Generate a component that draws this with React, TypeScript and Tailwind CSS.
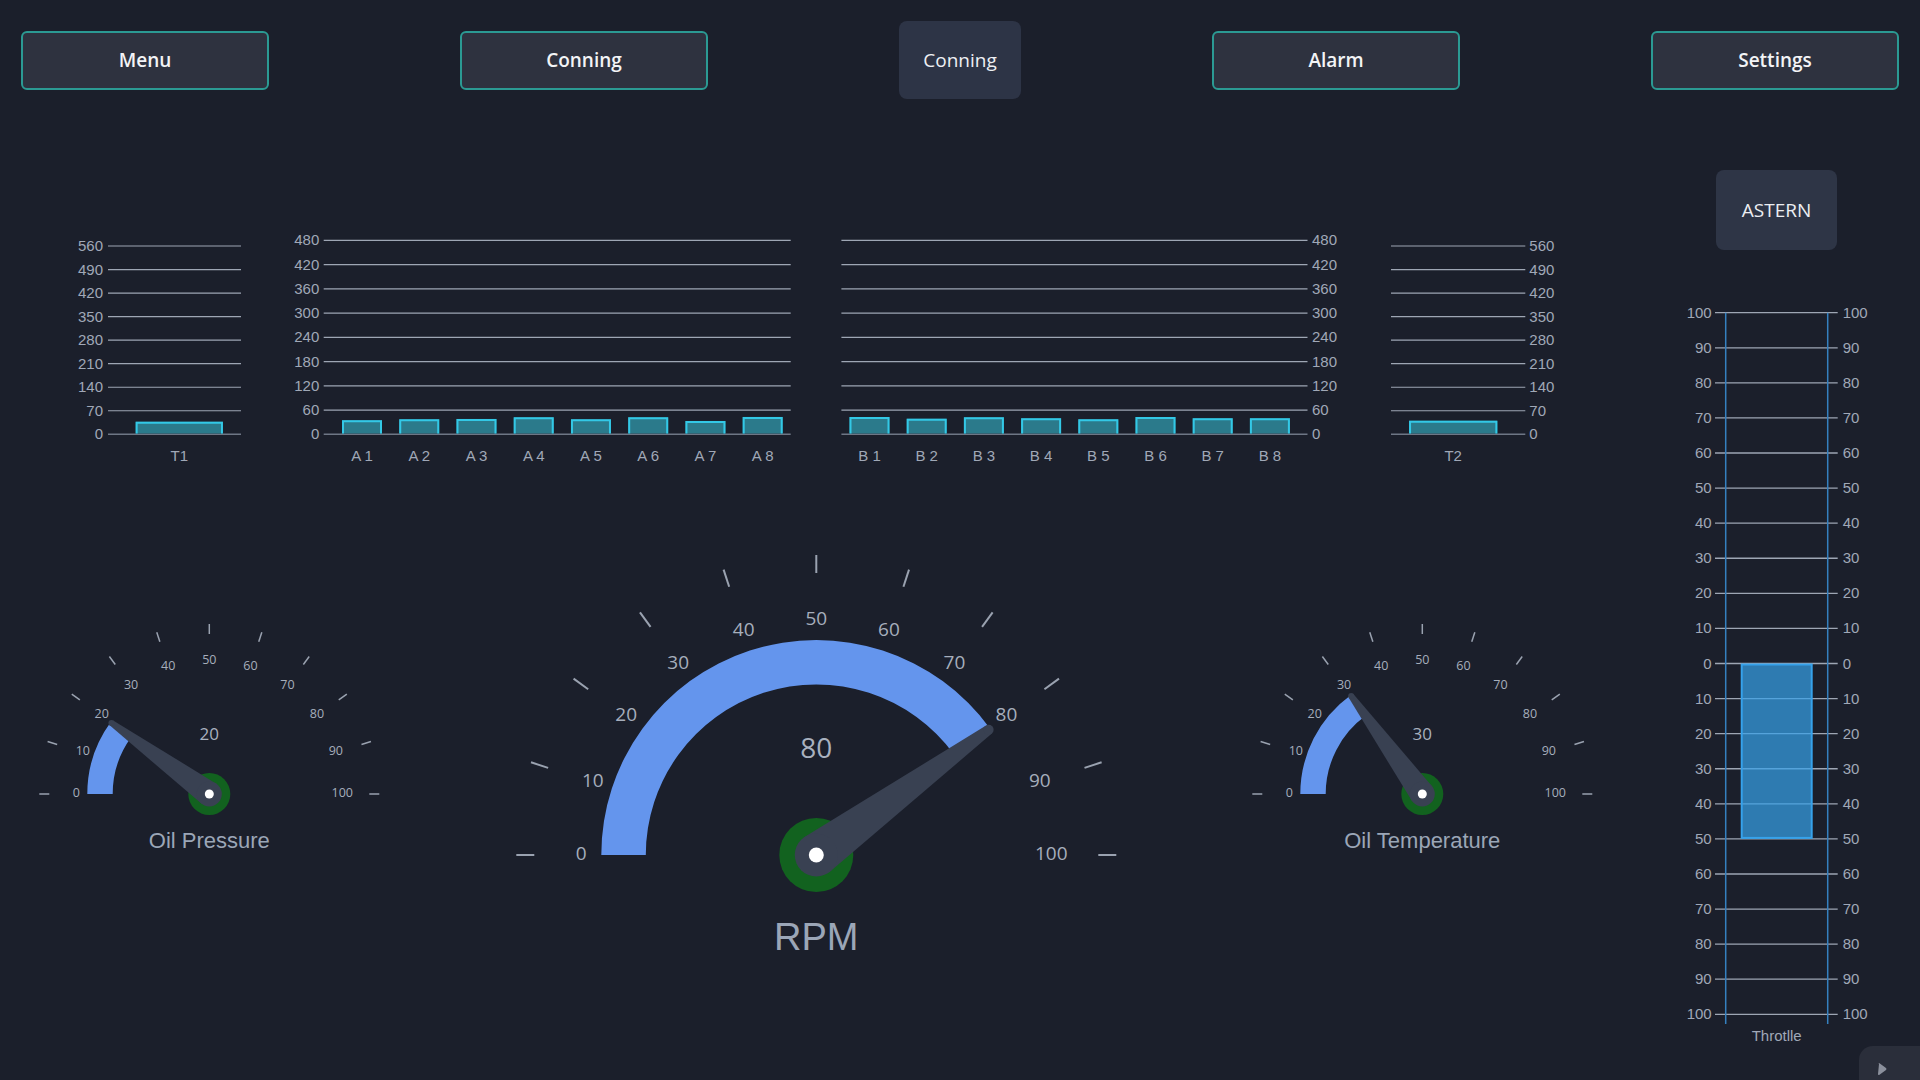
import React from "react";

const ARIAL = "'Liberation Sans', Arial, sans-serif";
const SEGOE = "'Open Sans', 'Noto Sans', sans-serif";

type Bar = { c: number; w: number; v: number; label: string };

function BarChart(props: {
  width: number;
  height: number;
  max: number;
  step: number;
  yTop: number;
  yBase: number;
  x1: number;
  x2: number;
  labelX: number;
  anchor: "start" | "end";
  bars: Bar[];
  labelY: number;
}) {
  const { width, height, max, step, yTop, yBase, x1, x2, labelX, anchor, bars, labelY } = props;
  const ticks: number[] = [];
  for (let v = 0; v <= max; v += step) ticks.push(v);
  const yOf = (v: number) => yBase - (v / max) * (yBase - yTop);
  return (
    <svg width={width} height={height} className="block shrink-0">
      {ticks.map((t) => (
        <g key={t}>
          <line
            x1={x1}
            x2={x2}
            y1={yOf(t)}
            y2={yOf(t)}
            stroke={t === 0 ? "#6e7685" : "#9ea6b4"}
            strokeWidth={t === 0 ? 1.6 : 1.2}
          />
          <text
            x={labelX}
            y={yOf(t) - 0.5}
            textAnchor={anchor}
            dominantBaseline="central"
            fontFamily={ARIAL}
            fontSize={15}
            fill="#a0a8b7"
          >
            {t}
          </text>
        </g>
      ))}
      {bars.map((b) => {
        const top = yOf(b.v);
        const l = b.c - b.w / 2;
        const r = b.c + b.w / 2;
        return (
          <g key={b.label}>
            <rect x={l} y={top} width={b.w} height={yBase - top - 0.8} fill="#2b7a8b" />
            <polyline
              points={`${l + 1},${yBase - 0.8} ${l + 1},${top + 1} ${r - 1},${top + 1} ${r - 1},${yBase - 0.8}`}
              fill="none"
              stroke="#33c8e6"
              strokeWidth={2}
            />
            <text
              x={b.c}
              y={labelY}
              textAnchor="middle"
              dominantBaseline="central"
              fontFamily={ARIAL}
              fontSize={15}
              fill="#a0a8b7"
            >
              {b.label}
            </text>
          </g>
        );
      })}
    </svg>
  );
}

function Gauge(props: {
  width: number;
  height: number;
  cx: number;
  cy: number;
  R: number;
  r: number;
  tIn: number;
  tOut: number;
  tickW: number;
  lR: number;
  lSize: number;
  value: number;
  vOff: number;
  vSize: number;
  hubR: number;
  hubIn: number;
  dotR: number;
  tipW: number;
  needleL: number;
  title: string;
  titleY: number;
  titleSize: number;
  textShift: number;
}) {
  const p = props;
  const pt = (rad: number, a: number) => [p.cx + rad * Math.cos(a), p.cy - rad * Math.sin(a)];
  const a0 = Math.PI;
  const a1 = Math.PI - (p.value / 100) * Math.PI;
  const [ox0, oy0] = pt(p.R, a0);
  const [ox1, oy1] = pt(p.R, a1);
  const [ix1, iy1] = pt(p.r, a1);
  const [ix0, iy0] = pt(p.r, a0);
  const arc = `M ${ox0} ${oy0} A ${p.R} ${p.R} 0 0 1 ${ox1} ${oy1} L ${ix1} ${iy1} A ${p.r} ${p.r} 0 0 0 ${ix0} ${iy0} Z`;
  const [tx, ty] = pt(p.needleL, a1);
  const nx = Math.sin(a1);
  const ny = Math.cos(a1);
  const needle = `${p.cx + nx * p.hubIn},${p.cy + ny * p.hubIn} ${tx + nx * p.tipW},${ty + ny * p.tipW} ${tx - nx * p.tipW},${ty - ny * p.tipW} ${p.cx - nx * p.hubIn},${p.cy - ny * p.hubIn}`;
  const ticks = Array.from({ length: 11 }, (_, i) => i * 10);
  return (
    <svg width={p.width} height={p.height} className="block shrink-0">
      {ticks.map((t) => {
        const a = Math.PI - (t / 100) * Math.PI;
        const [x1, y1] = pt(p.tIn, a);
        const [x2, y2] = pt(p.tOut, a);
        const [lx, ly] = pt(p.lR, a);
        return (
          <g key={t}>
            <line x1={x1} y1={y1} x2={x2} y2={y2} stroke="#9aa2b0" strokeWidth={p.tickW} />
            <text
              x={lx}
              y={ly - p.textShift}
              textAnchor="middle"
              dominantBaseline="central"
              fontFamily={SEGOE}
              fontSize={p.lSize}
              fill="#a6aebc"
            >
              {t}
            </text>
          </g>
        );
      })}
      <path d={arc} fill="#6495ed" />
      <text
        x={p.cx}
        y={p.cy - p.vOff - p.textShift}
        textAnchor="middle"
        dominantBaseline="central"
        fontFamily={SEGOE}
        fontSize={p.vSize}
        fill="#a9b1bf"
      >
        {p.value}
      </text>
      <circle cx={p.cx} cy={p.cy} r={p.hubR} fill="#12621f" />
      <polygon points={needle} fill="#394152" />
      <circle cx={tx} cy={ty} r={p.tipW} fill="#394152" />
      <circle cx={p.cx} cy={p.cy} r={p.hubIn} fill="#394152" />
      <circle cx={p.cx} cy={p.cy} r={p.dotR} fill="#ffffff" />
      <text
        x={p.cx}
        y={p.titleY}
        textAnchor="middle"
        dominantBaseline="central"
        fontFamily={ARIAL}
        fontSize={p.titleSize}
        fill="#9ba6b7"
      >
        {p.title}
      </text>
    </svg>
  );
}

function SmallGauge({ value, title, cx }: { value: number; title: string; cx: number }) {
  return (
    <Gauge
      width={380}
      height={320}
      cx={cx}
      cy={254}
      R={122}
      r={96.6}
      tIn={160}
      tOut={170}
      tickW={1.5}
      lR={133}
      lSize={12.5}
      value={value}
      vOff={59}
      vSize={17}
      hubR={21}
      hubIn={12.5}
      dotR={4.5}
      tipW={3}
      needleL={121}
      title={title}
      titleY={300}
      titleSize={22}
      textShift={2}
    />
  );
}

function Throttle() {
  const labels = [100, 90, 80, 70, 60, 50, 40, 30, 20, 10, 0, 10, 20, 30, 40, 50, 60, 70, 80, 90, 100];
  const y0 = 22.7;
  const sp = 35.08;
  const zero = y0 + 10 * sp;
  const fifty = y0 + 15 * sp;
  return (
    <svg width={240} height={760} className="block shrink-0">
      {labels.map((l, i) => (
        <g key={i}>
          <line x1={55} x2={177.7} y1={y0 + i * sp} y2={y0 + i * sp} stroke="#9ea6b4" strokeWidth={1.3} />
          <text
            x={51.7}
            y={y0 + i * sp - 0.5}
            textAnchor="end"
            dominantBaseline="central"
            fontFamily={ARIAL}
            fontSize={15}
            fill="#a0a8b7"
          >
            {l}
          </text>
          <text
            x={182.7}
            y={y0 + i * sp - 0.5}
            textAnchor="start"
            dominantBaseline="central"
            fontFamily={ARIAL}
            fontSize={15}
            fill="#a0a8b7"
          >
            {l}
          </text>
        </g>
      ))}
      <line x1={65.7} x2={65.7} y1={y0} y2={734} stroke="#3580c0" strokeWidth={1.5} />
      <line x1={167.7} x2={167.7} y1={y0} y2={734} stroke="#3580c0" strokeWidth={1.5} />
      <rect
        x={81.7}
        y={zero + 1}
        width={70}
        height={fifty - zero - 2}
        fill="rgba(54,162,235,0.7)"
        stroke="#36a2eb"
        strokeWidth={2}
      />
      <text
        x={116.7}
        y={745.7}
        textAnchor="middle"
        dominantBaseline="central"
        fontFamily={ARIAL}
        fontSize={15}
        fill="#a0a8b7"
      >
        Throtlle
      </text>
    </svg>
  );
}

function NavButton({ label }: { label: string }) {
  return (
    <button className="w-[248px] h-[59px] rounded-[6px] border-2 border-[#2b9a93] bg-[#2e323f] text-[#f3f4f6] text-[19px] font-semibold font-['Open_Sans',sans-serif]">
      {label}
    </button>
  );
}

export default function App() {
  const aVals = [35, 37, 38, 42, 37, 42, 33, 43];
  const bVals = [42.8, 38.6, 42, 39.6, 37, 42.8, 39.6, 39.6];
  const aBars: Bar[] = aVals.map((v, i) => ({ c: 82 + 57.24 * i, w: 40, v, label: `A ${i + 1}` }));
  const bBars: Bar[] = bVals.map((v, i) => ({ c: 39.5 + 57.2 * i, w: 40, v, label: `B ${i + 1}` }));
  return (
    <div className="relative w-[1920px] h-[1080px] overflow-hidden bg-[#1b1f2b] flex flex-col">
      <header className="flex items-center justify-between px-[21px] pt-[21px] h-[99px] shrink-0">
        <NavButton label="Menu" />
        <NavButton label="Conning" />
        <button className="w-[122px] h-[78px] rounded-[8px] bg-[#2d3446] text-[#eef0f4] text-[19px] font-['Open_Sans',sans-serif]">
          Conning
        </button>
        <NavButton label="Alarm" />
        <NavButton label="Settings" />
      </header>
      <main className="flex flex-1">
        <section className="w-[1640px] flex flex-col">
          <div className="flex items-start pl-[40px] mt-[131px]">
            <BarChart
              width={210}
              height={240}
              max={560}
              step={70}
              yTop={16}
              yBase={204.3}
              x1={68}
              x2={201}
              labelX={63}
              anchor="end"
              bars={[{ c: 139.3, w: 87.3, v: 37.5, label: "T1" }]}
              labelY={225.7}
            />
            <div className="ml-[30px]">
              <BarChart
                width={520}
                height={240}
                max={480}
                step={60}
                yTop={10.3}
                yBase={204.3}
                x1={43.7}
                x2={510.7}
                labelX={39.3}
                anchor="end"
                bars={aBars}
                labelY={225.7}
              />
            </div>
            <div className="ml-[30px]">
              <BarChart
                width={530}
                height={240}
                max={480}
                step={60}
                yTop={10.3}
                yBase={204.3}
                x1={11.4}
                x2={477.5}
                labelX={482}
                anchor="start"
                bars={bBars}
                labelY={225.7}
              />
            </div>
            <div className="ml-[20px]">
              <BarChart
                width={200}
                height={240}
                max={560}
                step={70}
                yTop={16}
                yBase={204.3}
                x1={11}
                x2={145.3}
                labelX={149.3}
                anchor="start"
                bars={[{ c: 73.2, w: 88.3, v: 40.5, label: "T2" }]}
                labelY={225.7}
              />
            </div>
          </div>
          <div className="flex items-start pl-[20px] mt-[70px]">
            <SmallGauge value={20} title="Oil Pressure" cx={189.3} />
            <div className="ml-[100px]">
              <Gauge
                width={630}
                height={420}
                cx={316.3}
                cy={315}
                R={215}
                r={170.5}
                tIn={282}
                tOut={300}
                tickW={2}
                lR={235}
                lSize={19}
                value={80}
                vOff={106}
                vSize={28}
                hubR={37}
                hubIn={21.5}
                dotR={7.5}
                tipW={5}
                needleL={213}
                title="RPM"
                titleY={396.7}
                titleSize={38}
                textShift={2.5}
              />
            </div>
            <div className="ml-[100px]">
              <SmallGauge value={30} title="Oil Temperature" cx={192.3} />
            </div>
          </div>
        </section>
        <aside className="w-[280px] flex flex-col">
          <div className="ml-[76px] mt-[71px] w-[121px] h-[80px] rounded-[8px] bg-[#2e3546] flex items-center justify-center text-[19px] text-[#eceef2] font-['Open_Sans',sans-serif]">
            ASTERN
          </div>
          <div className="ml-[20px] mt-[40px]">
            <Throttle />
          </div>
        </aside>
      </main>
      <div className="absolute right-0 bottom-0 w-[61px] h-[34px] rounded-tl-[14px] bg-[#2a2e3a]">
        <svg width={61} height={34} className="block">
          <path d="M20 18 Q19 16.5 20.5 17.3 L27 22 Q28 23 27 24 L20.5 28.7 Q19 29.5 19 28 Z" fill="#8b909c" />
        </svg>
      </div>
    </div>
  );
}
